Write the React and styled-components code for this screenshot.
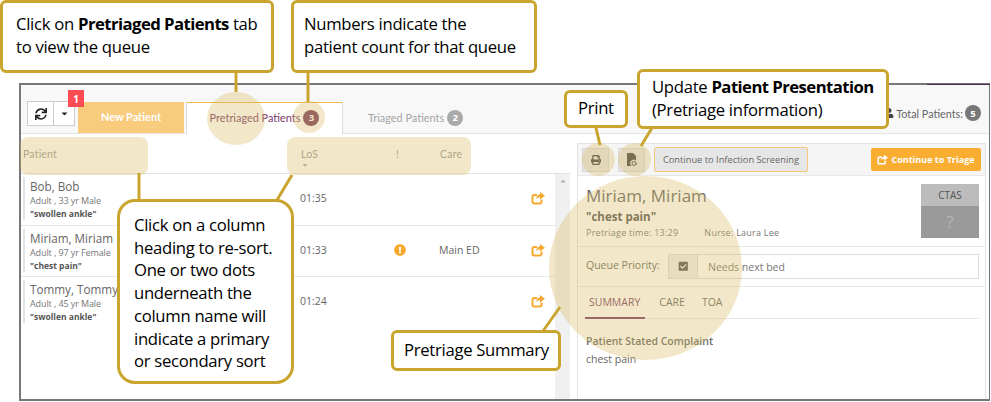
import React from "react";
import styled, { createGlobalStyle } from "styled-components";
import {
  FaSync,
  FaCaretDown,
  FaCaretUp,
  FaPrint,
  FaExclamationCircle,
  FaCheckSquare,
  FaUser,
} from "react-icons/fa";

const GlobalStyle = createGlobalStyle`
  html, body {
    margin: 0;
    padding: 0;
    background: #fff;
    font-family: "Open Sans", sans-serif;
    overflow: hidden;
  }
  * { box-sizing: border-box; }
`;

const Page = styled.div`
  position: relative;
  width: 991px;
  height: 402px;
  padding: 83px 0 0 19px;
`;
const Frame = styled.div`
  position: relative;
  width: 971px;
  height: 318px;
  border: 2px solid #777;
  border-right-width: 1px;
  display: flex;
  flex-direction: column;
  overflow: hidden;
`;
// TOP BAR
const TopBar = styled.div`
  height: 49px;
  flex: none;
  background: #f8f8f8;
  border-bottom: 1px solid #e3e3e3;
  display: flex;
  align-items: flex-end;
  padding-left: 6px;
`;
const ButtonGroup = styled.div`
  display: flex;
  height: 25px;
  margin-bottom: 7px;
  border: 1px solid #ccc;
  background: #fff;
  position: relative;
`;
const GroupButton = styled.div`
  width: ${(p) => p.$width}px;
  display: flex;
  align-items: center;
  justify-content: center;
  color: #222;
  font-size: ${(p) => p.$size}px;
  & + & {
    border-left: 1px solid #ccc;
  }
`;
const Badge = styled.div`
  position: absolute;
  top: -12px;
  right: -10px;
  width: 16px;
  height: 17px;
  background: #fb4b55;
  color: #fff;
  font: bold 10px "Open Sans", sans-serif;
  display: flex;
  align-items: center;
  justify-content: center;
`;
const NewTab = styled.div`
  width: 106px;
  height: 31px;
  margin-left: 3px;
  background: #f9cb7c;
  color: #fff;
  font: bold 10.9px "Lato", sans-serif;
  display: flex;
  align-items: center;
  justify-content: center;
  padding-bottom: 2px;
`;
const Tab = styled.div`
  width: 157px;
  height: 32px;
  margin-left: ${(p) => p.$gap}px;
  margin-bottom: -1px;
  background: ${(p) => (p.$active ? "#fff" : "transparent")};
  color: ${(p) => (p.$active ? "#7a3b6b" : "#a4a4a4")};
  border-top: 1px solid ${(p) => (p.$active ? "#f2b64c" : "transparent")};
  border-right: 1px solid ${(p) => (p.$active ? "#ddd" : "transparent")};
  border-left: 1px solid ${(p) => (p.$active ? "#ddd" : "transparent")};
  font: 10.9px "Lato", sans-serif;
  display: flex;
  align-items: center;
  justify-content: ${(p) => (p.$active ? "center" : "flex-start")};
  padding-left: ${(p) => (p.$active ? 0 : 24)}px;
  padding-bottom: 2px;
  gap: 3px;
`;
const Count = styled.span`
  width: 16px;
  height: 16px;
  border-radius: 50%;
  background: ${(p) => p.$color};
  color: #fff;
  font: bold 9.5px "Open Sans", sans-serif;
  display: inline-flex;
  align-items: center;
  justify-content: center;
`;
const Total = styled.div`
  margin-left: auto;
  margin-right: 8px;
  margin-bottom: 12px;
  display: flex;
  align-items: center;
  gap: 2px;
  color: #666;
  font: 10.8px "Lato", sans-serif;
  svg {
    color: #444;
    font-size: 10px;
  }
`;
// BODY
const Body = styled.div`
  flex: 1;
  display: flex;
  min-height: 0;
`;
const ListPanel = styled.div`
  width: 549px;
  flex: none;
  display: flex;
  flex-direction: column;
`;
const ColumnRow = styled.div`
  height: 40px;
  flex: none;
  border-bottom: 1px solid #e3e3e3;
  display: grid;
  grid-template-columns: 280px 95px 44px 1fr;
  padding-top: 14px;
  font-size: 10.5px;
  color: #999;
`;
const ColumnHead = styled.div`
  padding-left: ${(p) => p.$pad || 0}px;
  position: relative;
  font-family: "Lato", sans-serif;
  letter-spacing: 0.2px;
`;
const SortCaret = styled(FaCaretDown)`
  display: block;
  font-size: 8px;
  color: #aaa;
  margin-top: 1px;
`;
const ListBody = styled.div`
  flex: 1;
  display: flex;
  min-height: 0;
`;
const Rows = styled.div`
  flex: 1;
`;
const Row = styled.div`
  height: 51.5px;
  border-bottom: 1px solid ${(p) => (p.$last ? "transparent" : "#e8e8e8")};
  display: grid;
  grid-template-columns: 279px 94px 45px 1fr 24px;
  align-items: center;
  color: #666;
  font-size: 10.5px;
  line-height: 14px;
  padding-bottom: 2px;
`;
const PatientCell = styled.div`
  margin: 3px 0 0 2px;
  align-self: start;
  height: 43px;
  border-left: 2px solid #e3e3e3;
  padding-left: 5px;
  padding-top: 1px;
`;
const Name = styled.div`
  font-size: 11.7px;
  line-height: 16px;
  color: #666;
`;
const Details = styled.div`
  font-size: 9px;
  line-height: 13px;
  letter-spacing: -0.1px;
  color: #777;
`;
const Complaint = styled.div`
  font-size: 8.5px;
  font-weight: 700;
  line-height: 13px;
  color: #555;
`;
const Alert = styled(FaExclamationCircle)`
  color: #f7a92f;
  font-size: 12px;
  display: block;
`;
const ShareGlyph = styled.svg`
  display: block;
  width: ${(p) => p.$size}px;
  height: ${(p) => p.$size}px;
  color: ${(p) => p.$color};
`;
const Scrollbar = styled.div`
  width: 15px;
  flex: none;
  background: #f0f0f0;
  display: flex;
  justify-content: center;
  padding-top: 3px;
  font-size: 8px;
  color: #aaa;
`;
// DETAIL PANEL
const DetailPanel = styled.div`
  width: 409px;
  flex: none;
  margin: 9px 0 0 7px;
  border: 1px solid #e3e3e3;
  border-bottom: none;
  display: flex;
  flex-direction: column;
`;
const ActionBar = styled.div`
  height: 32px;
  flex: none;
  background: #f5f5f5;
  border-bottom: 1px solid #e8e8e8;
  display: flex;
  align-items: center;
  padding: 0 4px 0 4px;
`;
const IconButton = styled.div`
  width: 27px;
  height: 24px;
  margin-right: 9px;
  background: #e6e6e6;
  border: 1px solid #d8d8d8;
  color: #444;
  font-size: 10px;
  display: flex;
  align-items: center;
  justify-content: center;
`;
const InfectionButton = styled.div`
  height: 25px;
  width: 154px;
  background: #e6e6e6;
  border: 1px solid #f5c77a;
  border-radius: 2px;
  color: #666;
  font: 9.3px "Open Sans", sans-serif;
  display: flex;
  align-items: center;
  justify-content: center;
`;
const TriageButton = styled.div`
  margin-left: auto;
  width: 110px;
  height: 23px;
  background: #f9ae32;
  border-radius: 2px;
  color: #fff;
  font-size: 9px;
  font-weight: 700;
  display: flex;
  align-items: center;
  justify-content: center;
  gap: 3px;
`;
const PatientHeader = styled.div`
  height: 71px;
  flex: none;
  padding: 9px 6px 0 8px;
  border-bottom: 1px solid #e8e8e8;
  display: flex;
  justify-content: space-between;
`;
const HeaderName = styled.div`
  font-size: 17px;
  line-height: 22px;
  color: #666;
`;
const HeaderComplaint = styled.div`
  font-size: 11.5px;
  font-weight: 700;
  line-height: 15px;
  margin-top: 2px;
  color: #555;
`;
const MetaLine = styled.div`
  display: flex;
  gap: 26px;
  margin-top: 3px;
  font-size: 9px;
  letter-spacing: 0.25px;
  line-height: 12px;
  color: #777;
`;
const Ctas = styled.div`
  width: 58px;
  height: 54px;
  margin-top: -1px;
  display: flex;
  flex-direction: column;
`;
const CtasLabel = styled.div`
  height: 22px;
  background: #bcbcbc;
  color: #555;
  font-size: 10px;
  display: flex;
  align-items: center;
  justify-content: center;
`;
const CtasValue = styled.div`
  flex: 1;
  background: #9a9a9a;
  color: #b5b5b5;
  font-size: 16px;
  display: flex;
  align-items: center;
  justify-content: center;
`;
const PriorityRow = styled.div`
  height: 40px;
  flex: none;
  border-bottom: 1px solid #e8e8e8;
  display: flex;
  align-items: center;
  padding: 0 6px 0 8px;
`;
const PriorityLabel = styled.div`
  font-size: 10.5px;
  color: #666;
  width: 82px;
  margin-top: -3px;
`;
const PriorityField = styled.div`
  flex: 1;
  height: 25px;
  border: 1px solid #ddd;
  display: flex;
  align-items: center;
  font-size: 10.5px;
  color: #777;
`;
const CheckAddon = styled.div`
  width: 29px;
  height: 100%;
  background: #eee;
  border-right: 1px solid #ddd;
  display: flex;
  align-items: center;
  justify-content: center;
  color: #555;
  font-size: 10.5px;
  margin-right: 10px;
`;
const DetailTabs = styled.div`
  height: 32px;
  flex: none;
  margin: 0 6px 0 7px;
  border-bottom: 1px solid #e8e8e8;
  display: flex;
  align-items: stretch;
  gap: 14px;
  font-size: 10.5px;
`;
const DetailTab = styled.div`
  display: flex;
  align-items: center;
  padding: 0 ${(p) => (p.$active ? 5 : 3)}px 0 ${(p) => (p.$active ? 4 : 0)}px;
  color: ${(p) => (p.$active ? "#7a3b6b" : "#666")};
  border-bottom: 2px solid ${(p) => (p.$active ? "#7a3b6b" : "transparent")};
  margin-bottom: -1px;
`;
const SummaryBlock = styled.div`
  padding: 13px 8px 0;
  font-size: 10.5px;
  line-height: 18px;
  color: #666;
  b {
    display: block;
    font-weight: 600;
  }
`;
// OVERLAYS
const FrameAccent = styled.div`
  position: absolute;
  top: 84px;
  left: 927px;
  width: 63px;
  height: 1px;
  background: #4a2a4e;
`;
const Highlight = styled.div`
  position: absolute;
  left: ${(p) => p.$x}px;
  top: ${(p) => p.$y}px;
  width: ${(p) => p.$w}px;
  height: ${(p) => p.$h}px;
  border-radius: ${(p) => p.$radius};
  background: rgba(219, 190, 100, 0.35);
`;
const Connectors = styled.svg`
  position: absolute;
  left: 0;
  top: 0;
  width: 991px;
  height: 402px;
  pointer-events: none;
`;
const Callout = styled.div`
  position: absolute;
  left: ${(p) => p.$x}px;
  top: ${(p) => p.$y}px;
  width: ${(p) => p.$w}px;
  height: ${(p) => p.$h}px;
  padding: ${(p) => p.$pad};
  background: #fff;
  border: 3px solid #c9a42f;
  border-radius: ${(p) => p.$radius || 6}px;
  color: #000;
  font: 16.7px/22.7px "Open Sans", sans-serif;
  letter-spacing: -0.3px;
  white-space: nowrap;
  b {
    font-weight: 700;
    letter-spacing: -0.55px;
  }
`;

const ShareIcon = ({ size = 14, color = "#f7a92f" }) => (
  <ShareGlyph viewBox="0 0 14 14" $size={size} $color={color}>
    <path
      d="M10.5 8.5V11a1.5 1.5 0 0 1-1.5 1.5H3A1.5 1.5 0 0 1 1.5 11V5.5A1.5 1.5 0 0 1 3 4h3"
      fill="none"
      stroke="currentColor"
      strokeWidth="2"
    />
    <path d="M9 1l5 3.7L9 8.4V6.2c-2 0-3 .7-3.8 2.4C5.300 5.500 6.600 3.500 9 3.300z" fill="currentColor" />
  </ShareGlyph>
);

const ScreenerIcon = () => (
  <svg width="11" height="13" viewBox="0 0 11 13">
    <path d="M1 0h6l3 3v4.500a3.500 3.500 0 0 0-4.500 5.500H1z" fill="#444" />
    <circle cx="8" cy="10.500" r="2" fill="none" stroke="#444" strokeWidth="1.400" strokeDasharray="1.400 .7" />
  </svg>
);

const patients = [
  { name: "Bob, Bob", details: "Adult , 33 yr Male", complaint: "swollen ankle", los: "01:35" },
  { name: "Miriam, Miriam", details: "Adult , 97 yr Female", complaint: "chest pain", los: "01:33", alert: true, care: "Main ED" },
  { name: "Tommy, Tommy", details: "Adult , 45 yr Male", complaint: "swollen ankle", los: "01:24" },
];

const highlights = [
  { x: 207, y: 92, w: 58, h: 53, radius: "50%" },
  { x: 293, y: 101, w: 32, h: 32, radius: "50%" },
  { x: 20, y: 137, w: 128, h: 38, radius: "8px" },
  { x: 287, y: 137, w: 184, h: 38, radius: "8px" },
  { x: 582, y: 143, w: 33, h: 33, radius: "50%" },
  { x: 618, y: 143, w: 33, h: 33, radius: "50%" },
  { x: 549, y: 176, w: 193, h: 184, radius: "50%" },
];

const lines = [
  [236, 72, 236, 92],
  [308, 72, 308, 102],
  [139, 173, 139, 199],
  [292, 175, 277, 200],
  [596, 128, 600, 145],
  [652, 128, 641, 146],
  [560, 307, 543, 331],
];

const App = () => {
  return (
    <Page>
      <GlobalStyle />
      <Frame>
        <TopBar>
          <ButtonGroup>
            <GroupButton $width={25} $size={12}>
              <FaSync />
            </GroupButton>
            <GroupButton $width={21} $size={9}>
              <FaCaretDown />
            </GroupButton>
            <Badge>1</Badge>
          </ButtonGroup>
          <NewTab>New Patient</NewTab>
          <Tab $active $gap={2}>
            Pretriaged Patients <Count $color="#7a3b5e">3</Count>
          </Tab>
          <Tab $gap={0}>
            Triaged Patients <Count $color="#aaa">2</Count>
          </Tab>
          <Total>
            <FaUser /> Total Patients: <Count $color="#777">5</Count>
          </Total>
        </TopBar>
        <Body>
          <ListPanel>
            <ColumnRow>
              <ColumnHead $pad={2}>Patient</ColumnHead>
              <ColumnHead>
                LoS
                <SortCaret />
              </ColumnHead>
              <ColumnHead>!</ColumnHead>
              <ColumnHead>Care</ColumnHead>
            </ColumnRow>
            <ListBody>
              <Rows>
                {patients.map((patient, index) => (
                  <Row key={patient.name} $last={index === patients.length - 1}>
                    <PatientCell>
                      <Name>{patient.name}</Name>
                      <Details>{patient.details}</Details>
                      <Complaint>"{patient.complaint}"</Complaint>
                    </PatientCell>
                    <div>{patient.los}</div>
                    <div>{patient.alert && <Alert />}</div>
                    <div>{patient.care}</div>
                    <ShareIcon />
                  </Row>
                ))}
              </Rows>
              <Scrollbar>
                <FaCaretUp />
              </Scrollbar>
            </ListBody>
          </ListPanel>
          <DetailPanel>
            <ActionBar>
              <IconButton>
                <FaPrint />
              </IconButton>
              <IconButton>
                <ScreenerIcon />
              </IconButton>
              <InfectionButton>Continue to Infection Screening</InfectionButton>
              <TriageButton>
                <ShareIcon size={11} color="#fff" /> Continue to Triage
              </TriageButton>
            </ActionBar>
            <PatientHeader>
              <div>
                <HeaderName>Miriam, Miriam</HeaderName>
                <HeaderComplaint>"chest pain"</HeaderComplaint>
                <MetaLine>
                  <span>Pretriage time: 13:29</span>
                  <span>Nurse: Laura Lee</span>
                </MetaLine>
              </div>
              <Ctas>
                <CtasLabel>CTAS</CtasLabel>
                <CtasValue>?</CtasValue>
              </Ctas>
            </PatientHeader>
            <PriorityRow>
              <PriorityLabel>Queue Priority:</PriorityLabel>
              <PriorityField>
                <CheckAddon>
                  <FaCheckSquare />
                </CheckAddon>
                Needs next bed
              </PriorityField>
            </PriorityRow>
            <DetailTabs>
              <DetailTab $active>SUMMARY</DetailTab>
              <DetailTab>CARE</DetailTab>
              <DetailTab>TOA</DetailTab>
            </DetailTabs>
            <SummaryBlock>
              <b>Patient Stated Complaint</b>
              chest pain
            </SummaryBlock>
          </DetailPanel>
        </Body>
      </Frame>
      <FrameAccent />

      {highlights.map((h) => (
        <Highlight key={`${h.x}-${h.y}`} $x={h.x} $y={h.y} $w={h.w} $h={h.h} $radius={h.radius} />
      ))}
      <Connectors viewBox="0 0 991 402">
        {lines.map(([x1, y1, x2, y2]) => (
          <line key={`${x1}-${y1}`} x1={x1} y1={y1} x2={x2} y2={y2} stroke="#c9a42f" strokeWidth="3" />
        ))}
      </Connectors>

      <Callout $x={0} $y={0} $w={274} $h={73} $pad="10px 13px">
        Click on <b>Pretriaged Patients</b> tab
        <br />
        to view the queue
      </Callout>
      <Callout $x={291} $y={0} $w={246} $h={73} $pad="10px 10px">
        Numbers indicate the
        <br />
        patient count for that queue
      </Callout>
      <Callout $x={564} $y={90} $w={64} $h={38} $pad="4px 11px">
        Print
      </Callout>
      <Callout $x={637} $y={69} $w={252} $h={60} $pad="4px 12px">
        Update <b>Patient Presentation</b>
        <br />
        (Pretriage information)
      </Callout>
      <Callout $x={117} $y={199} $w={177} $h={185} $radius={18} $pad="12px 14px">
        Click on a column
        <br />
        heading to re-sort.
        <br />
        One or two dots
        <br />
        underneath the
        <br />
        column name will
        <br />
        indicate a primary
        <br />
        or secondary sort
      </Callout>
      <Callout $x={391} $y={330} $w={170} $h={41} $pad="6px 10px">
        Pretriage Summary
      </Callout>
    </Page>
  );
};

export default App;
